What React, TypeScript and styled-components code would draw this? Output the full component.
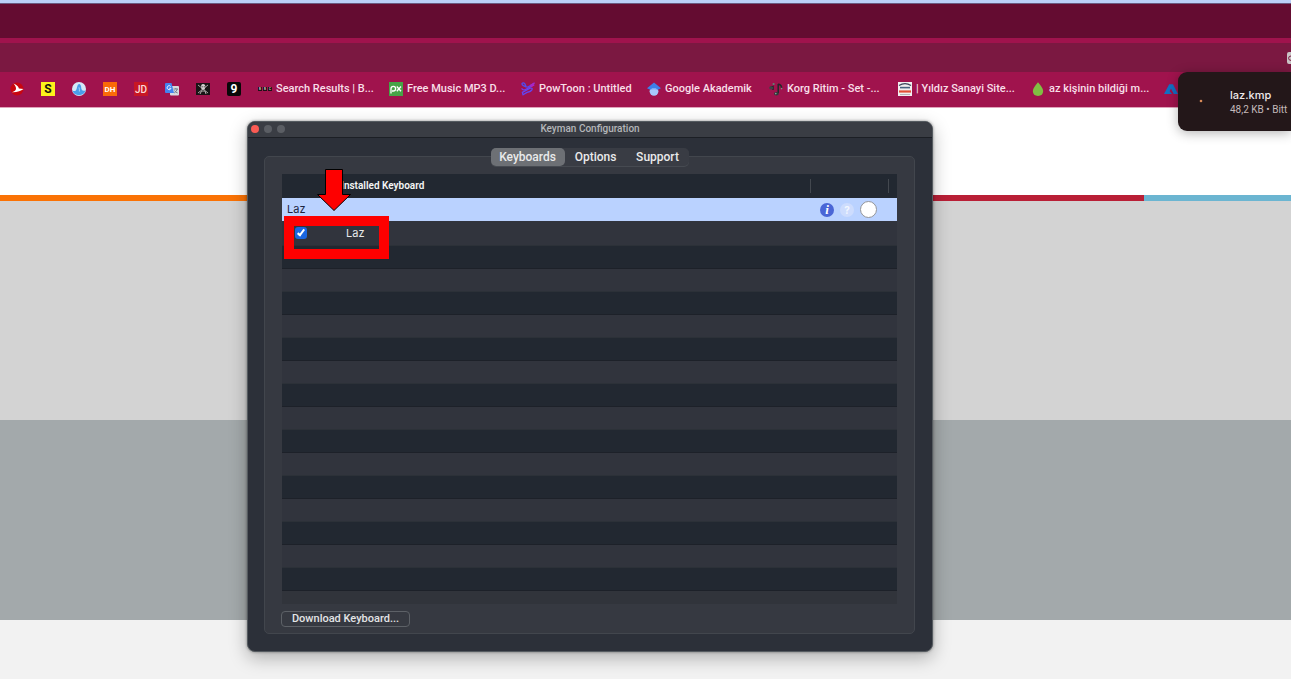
import React from "react";
import styled, { createGlobalStyle } from "styled-components";

const GlobalStyle = createGlobalStyle`
  *, *::before, *::after { box-sizing: border-box; }
  html { overflow: hidden; }
  body { margin: 0; font-family: Inter, "Liberation Sans", sans-serif; }
  button, input { font: inherit; margin: 0; }
`;

const narrowFont = `Roboto, "Liberation Sans", sans-serif`;

const Screen = styled.div`
  position: relative;
  display: flex;
  flex-direction: column;
  min-height: 100vh;
  overflow: hidden;
  background: #f2f2f2;
`;

const MenuStrip = styled.div`
  height: 4px;
  background: #bcd0f8;
  border-bottom: 1px solid #6b5a80;
`;

const TabStrip = styled.div`
  height: 39px;
  background: #640c31;
  border-bottom: 5px solid #a0134d;
`;

const AddressBar = styled.div`
  display: flex;
  align-items: center;
  justify-content: flex-end;
  height: 29px;
  background: #7b1841;
`;

const Bookmarks = styled.nav`
  display: flex;
  align-items: center;
  gap: 17px;
  height: 36px;
  padding: 0 0 2px 10px;
  overflow: hidden;
  background: #a0134d;
  border-bottom: 1px solid #dfa3ba;
`;

const Bookmark = styled.a<{ $width: number }>`
  display: flex;
  flex: none;
  align-items: center;
  gap: 4px;
  width: ${(p) => p.$width}px;
  color: #f8dfe8;
  font-family: ${narrowFont};
  font-size: 11px;
  font-weight: 500;
  line-height: 16px;
  text-decoration: none;
  white-space: nowrap;

  svg { flex: none; display: block; }
`;

const Band = styled.div<{ $height: number; $color: string }>`
  height: ${(p) => p.$height}px;
  background: ${(p) => p.$color};
`;

const Stripe = styled.div`
  display: flex;
  height: 6px;
`;

const StripePart = styled.div<{ $color: string; $grow: number }>`
  flex: ${(p) => p.$grow} 0 0;
  background: ${(p) => p.$color};
`;

const Toast = styled.aside`
  position: absolute;
  top: 72px;
  right: 0;
  display: flex;
  align-items: center;
  gap: 26px;
  width: 113px;
  height: 59px;
  padding-left: 20px;
  border-radius: 9px 0 0 9px;
  background: #231719;
  box-shadow: 0 2px 12px rgba(0, 0, 0, 0.3);
  color: #efe9ea;
  white-space: nowrap;

  svg { flex: none; }
`;

const ToastTitle = styled.div`
  font-size: 11px;
  font-weight: 500;
  line-height: 16px;
`;

const ToastMeta = styled.div`
  color: #c3babb;
  font-family: ${narrowFont};
  font-size: 10px;
  line-height: 14px;
`;

const Window = styled.section`
  position: absolute;
  top: 121px;
  left: 247px;
  right: 358px;
  border: 1px solid #555b60;
  border-radius: 8px;
  background: #2c3039;
  box-shadow: 0 6px 18px rgba(0, 0, 0, 0.28), 0 0 3px rgba(0, 0, 0, 0.4);
`;

const TitleBar = styled.header`
  display: grid;
  grid-template-columns: 1fr auto 1fr;
  align-items: center;
  height: 16px;
  padding: 0 3px 1px;
  border-bottom: 1px solid #1c1f25;
  border-radius: 7px 7px 0 0;
  background: #3a3d44;
`;

const Lights = styled.div`
  display: flex;
  gap: 5px;
`;

const Light = styled.span<{ $color: string }>`
  width: 8px;
  height: 8px;
  border-radius: 50%;
  background: ${(p) => p.$color};
`;

const WindowTitle = styled.h1`
  margin: 0;
  color: #b4b6b9;
  font-family: ${narrowFont};
  font-size: 10px;
  font-weight: 500;
  line-height: 14px;
`;

const Content = styled.div`
  padding: 10px 17px 17px 16px;
`;

const Tabs = styled.div`
  position: relative;
  z-index: 1;
  display: flex;
  width: 198px;
  height: 18px;
  margin: 0 auto -10px;
  border-radius: 5px;
  background: #393c44;
  box-shadow: 0 1px 0 #464a51;
`;

const Tab = styled.button<{ $active?: boolean }>`
  flex: ${(p) => (p.$active ? "0 0 74px" : "1")};
  padding: 0;
  border: 0;
  border-radius: 5px;
  background: ${(p) => (p.$active ? "#6d7075" : "transparent")};
  color: #e9eaeb;
  font-family: ${narrowFont};
  font-size: 12px;
  font-weight: 500;
  line-height: 18px;
`;

const Group = styled.div`
  padding: 17px;
  padding-bottom: 6px;
  border: 1px solid #42464d;
  border-radius: 5px;
  background: #363941;
`;

const KeyboardTable = styled.table`
  width: 100%;
  table-layout: fixed;
  border-collapse: collapse;
  color: #e8e9ea;
  font-size: 11px;
  line-height: 16px;
  text-align: left;

  th, td { padding: 0; }
`;

const Column = styled.col<{ $width?: number }>`
  width: ${(p) => (p.$width ? `${p.$width}px` : "auto")};
`;

const HeaderRow = styled.tr`
  height: 24px;
  background: #222831;
`;

const HeaderCell = styled.th`
  color: #f4f5f5;
  font-family: ${narrowFont};
  font-size: 10px;
  font-weight: 600;
`;

const Divider = styled.span`
  display: block;
  height: 14px;
  border-right: 1px solid #43484f;
`;

const HeaderLabel = styled(Divider)`
  line-height: 14px;
`;

const PackageRow = styled.tr`
  height: 23px;
  background: #bad2ff;
  color: #1c2440;
`;

const PackageName = styled.td`
  && { padding: 0 0 2px 5px; }
`;

const LayoutRow = styled.tr`
  height: 24px;
  background: #31343d;
`;

const Indented = styled.td<{ $indent: number }>`
  && { padding-left: ${(p) => p.$indent}px; }
`;

const Actions = styled.div`
  display: flex;
  align-items: center;
  gap: 6px;
  padding-left: 9px;
`;

const RoundButton = styled.button<{ $bg: string; $color?: string; $italic?: boolean }>`
  width: 14px;
  height: 14px;
  padding: 0;
  border: 0;
  border-radius: 50%;
  background: ${(p) => p.$bg};
  color: ${(p) => p.$color};
  font-family: ${(p) => (p.$italic ? '"Liberation Serif", serif' : "inherit")};
  font-size: ${(p) => (p.$italic ? 13 : 10)}px;
  font-style: ${(p) => (p.$italic ? "italic" : "normal")};
  font-weight: 700;
  line-height: 14px;
  text-align: center;
`;

const RemoveButton = styled.button`
  width: 17px;
  height: 17px;
  padding: 0;
  border: 1px solid #93959a;
  border-radius: 50%;
  background: #fff;
`;

const Check = styled.input`
  position: relative;
  display: block;
  appearance: none;
  width: 12px;
  height: 12px;
  border-radius: 3px;
  background: #1a66e0;

  &:checked::after {
    content: "";
    position: absolute;
    top: 1px;
    left: 4px;
    width: 4px;
    height: 8px;
    border: solid #fff;
    border-width: 0 2px 2px 0;
    transform: rotate(38deg);
  }
`;

const EmptyRows = styled.div`
  display: flex;
  flex-direction: column;
  height: 346px;
`;

const EmptyRow = styled.div`
  flex: 1;
  background: #31343d;

  &:nth-child(odd) {
    background: #222831;
    border-top: 1px solid #2c3138;
    border-bottom: 1px solid #1d2129;
  }
`;

const PartialRow = styled.div`
  height: 13px;
  margin-bottom: 7px;
  background: #31343b;
`;

const DownloadButton = styled.button`
  display: block;
  height: 16px;
  width: 129px;
  margin-left: -1px;
  padding: 0;
  border: 1px solid #5d6167;
  border-radius: 4px;
  background: #363941;
  color: #e3e4e6;
  font-family: ${narrowFont};
  font-size: 11px;
  font-weight: 500;
  line-height: 14px;
`;

const Highlight = styled.div`
  position: absolute;
  top: 94px;
  left: 36px;
  width: 105px;
  height: 43px;
  border: 10px solid #fe0000;
  pointer-events: none;
`;

const Arrow = styled.svg`
  position: absolute;
  top: 46px;
  left: 68px;
  pointer-events: none;
`;

const Icon = ({ children }: { children: React.ReactNode }) => (
  <svg width="14" height="14" viewBox="0 0 14 14" aria-hidden="true">{children}</svg>
);

const Mono = ({ bg, fg, text, size, radius = 0 }: { bg: string; fg: string; text: string; size: number; radius?: number }) => (
  <Icon>
    <rect width="14" height="14" rx={radius} fill={bg} />
    <text x="7" y={7 + size * 0.36} textAnchor="middle" fontSize={size} fontWeight="700" fill={fg}>{text}</text>
  </Icon>
);

const bookmarks: { name: string; label?: string; width: number; icon: React.ReactNode }[] = [
  {
    name: "Turkish Airlines", width: 14, icon: (
      <Icon>
        <circle cx="7" cy="7" r="6.5" fill="#c8060f" />
        <path d="M3.5 1.5C6.4 2.6 8.6 4.6 8.9 6.6L13.5 7C11 9 7 10.4 2 10.2C4.6 9.4 6 8.4 6 6.8C6 4.8 5 3 3.5 1.5Z" fill="#fff" />
      </Icon>
    ),
  },
  { name: "Sahibinden", width: 14, icon: <Mono bg="#fdf21b" fg="#16160b" text="S" size={12} /> },
  {
    name: "Weather", width: 14, icon: (
      <Icon>
        <circle cx="7" cy="7" r="7" fill="#d5e9f8" />
        <path d="M0.4 8.5C3 10 4.4 8.6 5 5.2Q5.8 1.6 7.4 2.1Q9.2 2.8 9.3 6.5Q9.5 9.4 13.6 8.5A7 7 0 0 1 0.4 8.5Z" fill="#4a9dea" />
        <path d="M7 5.3Q7.6 7 7.4 9.5" stroke="#a6d3f8" fill="none" />
      </Icon>
    ),
  },
  { name: "DonanımHaber", width: 14, icon: <Mono bg="#fa6a08" fg="#fff" text="DH" size={8} /> },
  {
    name: "JDownloader", width: 14, icon: (
      <Icon>
        <rect width="14" height="14" fill="#c81724" />
        <text x="7" y="11" textAnchor="middle" fontSize="10" fontWeight="500" fill="#fbdcdc">JD</text>
      </Icon>
    ),
  },
  {
    name: "Google Translate", width: 14, icon: (
      <Icon>
        <rect x="5" y="4" width="9" height="9.5" rx="1" fill="#d7dade" />
        <path d="M8.5 7H13M10.8 6V7M12.4 7Q11.5 9.5 9.2 11M9.5 8.5Q10.7 10.5 12.7 11" stroke="#74818e" fill="none" />
        <path d="M1 1H6.5L9 11H1Q0 11 0 10V2Q0 1 1 1Z" fill="#4383ef" />
        <path d="M5.7 4.5A2 2 0 1 0 6 6.3H4.2" stroke="#e8f0ff" fill="none" />
      </Icon>
    ),
  },
  {
    name: "Pirate", width: 14, icon: (
      <Icon>
        <rect y="1" width="14" height="12" fill="#171415" />
        <path d="M2 3L12 11M12 3L2 11" stroke="#a8a5a5" />
        <path d="M5 5Q5 2 7 2Q9.4 2 9.4 5L8.6 7.5H5.7Z" fill="#d5d1d1" />
        <path d="M5.7 4.8H6.6M7.8 4.8H8.7" stroke="#171415" />
        <path d="M4 12L5.5 9H9L10 12" fill="none" stroke="#b2aeae" />
      </Icon>
    ),
  },
  { name: "9GAG", width: 14, icon: <Mono bg="#080808" fg="#fff" text="9" size={12} radius={2} /> },
  {
    name: "BBC", label: "Search Results | B...", width: 114, icon: (
      <Icon>
        <path d="M0 5H4V9H0ZM5 5H9V9H5ZM10 5H14V9H10Z" fill="#1d1116" />
        <text x="1" y="8" fontSize="3" fill="#e8d8df">B</text>
        <text x="6" y="8" fontSize="3" fill="#e8d8df">B</text>
        <text x="11" y="8" fontSize="3" fill="#e8d8df">C</text>
      </Icon>
    ),
  },
  {
    name: "Pixabay", label: "Free Music MP3 D...", width: 115, icon: (
      <Icon>
        <rect width="14" height="14" fill="#46a447" />
        <path d="M2 11.5V6.6A2.3 2.3 0 1 1 4.3 9H3M7.8 4.5L12 9.2M12 4.5L7.8 9.2" stroke="#fff" strokeWidth="1.3" fill="none" />
      </Icon>
    ),
  },
  {
    name: "PowToon", label: "PowToon : Untitled", width: 109, icon: (
      <Icon>
        <g fill="none" strokeWidth="1.3" strokeLinecap="round">
          <path d="M5 4.8L2.4 3.6Q0.6 2.6 1.1 1.4Q2.2 0 3.8 1.8L5 4.2Q6 6 8.2 4.2L13 1.2" stroke="#504df0" />
          <path d="M1 6.8Q2.5 8.8 5 7.3L12.6 3" stroke="#753ef0" />
          <path d="M2 12.8L1.4 10.4L9 6.2Q11.8 5.6 11 7.6Q10 9.6 6 10.4L2 12.8" stroke="#6246f2" />
          <path d="M9.6 3.2L13 1.2M10.3 4.4L12.8 3" stroke="#b123c4" />
        </g>
      </Icon>
    ),
  },
  {
    name: "Google Scholar", label: "Google Akademik", width: 105, icon: (
      <Icon>
        <circle cx="7" cy="9.3" r="4.4" fill="#a7c8fb" />
        <path d="M7 0.4L14 6.2L10.8 7.8Q7 4.3 3.2 7.8L0 6.2Z" fill="#3d7fe8" />
        <path d="M3.2 7.8Q7 4.3 10.8 7.8Q7 6.8 3.2 7.8Z" fill="#76a7f4" />
      </Icon>
    ),
  },
  {
    name: "Korg", label: "Korg Ritim - Set -...", width: 112, icon: (
      <Icon>
        <path d="M1 5.6L4 4.6V8M9.2 2V11M9.2 2Q12.8 3 12.5 6" stroke="#22272a" strokeWidth="1.5" fill="none" />
        <ellipse cx="2.2" cy="6" rx="2" ry="1.4" fill="#3a4645" />
        <ellipse cx="7.4" cy="11.8" rx="2.4" ry="1.8" fill="#30393a" />
        <circle cx="4.6" cy="2" r="1.1" fill="#608575" />
        <circle cx="6.8" cy="11.6" r="0.8" fill="#8cab9d" />
        <circle cx="12.6" cy="6.6" r="0.8" fill="#7d8f86" />
      </Icon>
    ),
  },
  {
    name: "Yıldız", label: "| Yıldız Sanayi Site...", width: 116, icon: (
      <Icon>
        <rect width="14" height="14" fill="#f1eff0" />
        <path d="M1 3.5Q7 -0.4 13 3.5" stroke="#3a4458" strokeWidth="1.3" fill="none" />
        <path d="M2 5.6H12" stroke="#47627e" strokeWidth="1.6" />
        <path d="M1 9.5H13" stroke="#e24f35" strokeWidth="2.2" />
        <path d="M2 12.5H12" stroke="#b6b6ba" />
      </Icon>
    ),
  },
  {
    name: "Ekşi", label: "az kişinin bildiği m...", width: 116, icon: (
      <Icon>
        <path d="M7 0.2Q12.3 6.2 12.2 9Q12 13.8 7 14Q2 13.8 1.8 9Q1.7 6.2 7 0.2Z" fill="#80bf42" />
      </Icon>
    ),
  },
  {
    name: "Azure", width: 14, icon: (
      <Icon>
        <path d="M0 12L5.2 2.2H9L14 12H9.8L7 6.5L5.6 9.2L8 12Z" fill="#1170c4" />
      </Icon>
    ),
  },
];

export default function App() {
  return (
    <>
      <GlobalStyle />
      <Screen>
        <MenuStrip />
        <TabStrip />
        <AddressBar>
          <svg width="4" height="12" viewBox="0 0 4 12" aria-hidden="true">
            <path d="M4 0H2Q0 0 0 2V10Q0 12 2 12H4Z" fill="#c9c3c5" />
            <path d="M4 4Q1.6 4 1.6 6.2T4 8.4" fill="none" stroke="#7b1841" />
          </svg>
        </AddressBar>
        <Bookmarks aria-label="Bookmarks">
          {bookmarks.map((b) => (
            <Bookmark key={b.name} href="#" aria-label={b.label ?? b.name} $width={b.width}>
              {b.icon}
              {b.label}
            </Bookmark>
          ))}
        </Bookmarks>
        <Band $height={87} $color="#ffffff" />
        <Stripe>
          <StripePart $color="#fa7205" $grow={590} />
          <StripePart $color="#b91f36" $grow={554} />
          <StripePart $color="#6bb5d1" $grow={147} />
        </Stripe>
        <Band $height={219} $color="#d3d3d3" />
        <Band $height={200} $color="#a3a9ab" />

        <Toast>
          <svg width="6" height="6" viewBox="0 0 6 6" aria-hidden="true">
            <circle cx="3" cy="2" r="1.3" fill="#d98a58" />
          </svg>
          <div>
            <ToastTitle>laz.kmp</ToastTitle>
            <ToastMeta>48,2 KB • Bitt</ToastMeta>
          </div>
        </Toast>

        <Window aria-label="Keyman Configuration">
          <TitleBar>
            <Lights>
              <Light $color="#fb5b54" />
              <Light $color="#5b5e64" />
              <Light $color="#5b5e64" />
            </Lights>
            <WindowTitle>Keyman Configuration</WindowTitle>
          </TitleBar>
          <Content>
            <Tabs role="tablist">
              <Tab role="tab" aria-selected="true" $active>Keyboards</Tab>
              <Tab role="tab" aria-selected="false">Options</Tab>
              <Tab role="tab" aria-selected="false">Support</Tab>
            </Tabs>
            <Group>
              <KeyboardTable>
                <colgroup>
                  <Column $width={59} />
                  <Column />
                  <Column $width={78} />
                  <Column $width={8} />
                </colgroup>
                <thead>
                  <HeaderRow>
                    <HeaderCell />
                    <HeaderCell scope="col"><HeaderLabel>Installed Keyboard</HeaderLabel></HeaderCell>
                    <HeaderCell><Divider /></HeaderCell>
                    <HeaderCell />
                  </HeaderRow>
                </thead>
                <tbody>
                  <PackageRow>
                    <PackageName colSpan={2}>Laz</PackageName>
                    <td colSpan={2}>
                      <Actions>
                        <RoundButton $bg="#4a66d6" $color="#fff" $italic aria-label="Information">i</RoundButton>
                        <RoundButton $bg="#cddcfd" $color="#f2f6ff" aria-label="Help">?</RoundButton>
                        <RemoveButton aria-label="Remove" />
                      </Actions>
                    </td>
                  </PackageRow>
                  <LayoutRow>
                    <Indented $indent={13}><Check id="laz" type="checkbox" defaultChecked /></Indented>
                    <Indented $indent={5} colSpan={3}><label htmlFor="laz">Laz</label></Indented>
                  </LayoutRow>
                </tbody>
              </KeyboardTable>
              <EmptyRows>
                {Array.from({ length: 15 }, (_, i) => <EmptyRow key={i} />)}
              </EmptyRows>
              <PartialRow />
              <DownloadButton>Download Keyboard...</DownloadButton>
            </Group>
          </Content>
          <Arrow width="36" height="44" viewBox="0 0 36 44" aria-hidden="true">
            <path d="M9.5 1.5H26.5V26.5H34.5L18 42.5L1.5 26.5H9.5Z" fill="#fe0000" stroke="#000" />
          </Arrow>
          <Highlight />
        </Window>
      </Screen>
    </>
  );
}
